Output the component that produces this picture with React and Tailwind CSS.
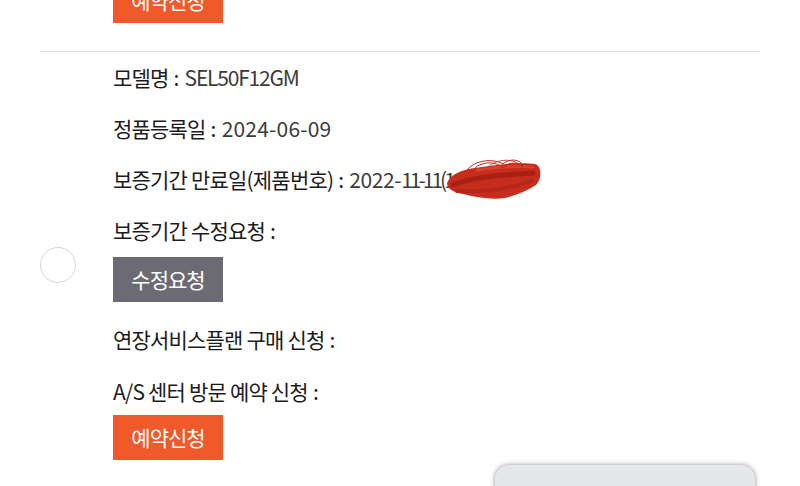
import React from 'react'

const FONT = { fontFamily: '"Noto Sans CJK KR", "Noto Sans", sans-serif' }

function Row({ label, children, tall }) {
  return (
    <div className={`${tall ? 'h-[52px]' : 'h-[51px]'} flex items-center text-[21px] tracking-[-0.8px] text-[#1c1c1c]`}>
      <span>{label}</span>
      <span className="ml-[5px]">:</span>
      {children}
    </div>
  )
}

function Scribble() {
  return (
    <span className="relative inline-block w-[90px] h-[20px]">
      <svg className="absolute left-[-6px] top-[-12px]" width="96" height="44" viewBox="0 0 96 44">
        <path d="M0 25 C4 16 14 12 28 10 C50 6 76 4 88 6 C95 8 95 21 89 27 C80 33 70 37 58 40 C44 42 28 39 16 36 C6 34 0 31 0 25 Z" fill="#c62d1c" />
        <path d="M6 27 C24 19 54 17 86 15" stroke="#a91f14" strokeWidth="5" fill="none" strokeLinecap="round" />
        <path d="M10 33 C34 34 60 32 84 23" stroke="#b5261a" strokeWidth="4" fill="none" strokeLinecap="round" />
        <path d="M30 12 C50 9 70 8 86 9" stroke="#d9402a" strokeWidth="3" fill="none" strokeLinecap="round" />
        <path d="M20 12 C28 2 46 0 56 6 C62 0 74 1 76 8 C68 3 60 5 56 10 C48 2 32 4 26 12" stroke="#b8271a" strokeWidth="1" fill="none" />
        <path d="M40 10 C48 1 64 0 72 6" stroke="#c0301f" strokeWidth="0.8" fill="none" />
      </svg>
    </span>
  )
}

export default function App() {
  return (
    <div className="relative w-[800px] h-[486px] overflow-hidden bg-white" style={FONT}>
      <div className="px-[40px]">
        <div className="pl-[73px]">
          <button className="-mt-[22px] w-[110px] h-[45px] bg-[#f0592a] text-white text-[21px] tracking-[-1px] flex items-center justify-center">
            예약신청
          </button>
        </div>

        <div className="mt-[28px] h-px bg-[#dcdce3]" />

        <div className="flex">
          <div className="w-[73px] shrink-0">
            <div className="mt-[195px] w-[36px] h-[36px] rounded-full border-[1.5px] border-[#d6d6dc] bg-white" />
          </div>

          <div className="flex flex-col">
            <Row label="모델명">
              <span className="ml-[6px] tracking-[-1.2px] text-[#3c3c3c]">SEL50F12GM</span>
            </Row>
            <Row label="정품등록일">
              <span className="ml-[6px] tracking-[0.2px] text-[#3c3c3c]">2024-06-09</span>
            </Row>
            <Row label="보증기간 만료일(제품번호)">
              <span className="ml-[6px] tracking-[-0.4px] text-[#3c3c3c]">2022-</span>
              <span className="tracking-[-3px] text-[#3c3c3c]">11-11(1</span>
              <Scribble />
            </Row>
            <Row label="보증기간 수정요청" />
            <button className="mt-px w-[110px] h-[45px] bg-[#6c6b73] text-white text-[21px] tracking-[-1px] flex items-center justify-center">
              수정요청
            </button>
            <div className="mt-[12px]">
              <Row label="연장서비스플랜 구매 신청" tall />
              <Row label="A/S 센터 방문 예약 신청" tall />
            </div>
            <button className="-mt-[3px] w-[110px] h-[45px] bg-[#f0592a] text-white text-[21px] tracking-[-1px] flex items-center justify-center">
              예약신청
            </button>
          </div>
        </div>
      </div>

      <div className="absolute left-[495px] top-[465px] w-[260px] h-[60px] rounded-[14px] bg-[#e5e7eb] shadow-[0_0_5px_rgba(0,0,0,0.45)]" />
    </div>
  )
}
